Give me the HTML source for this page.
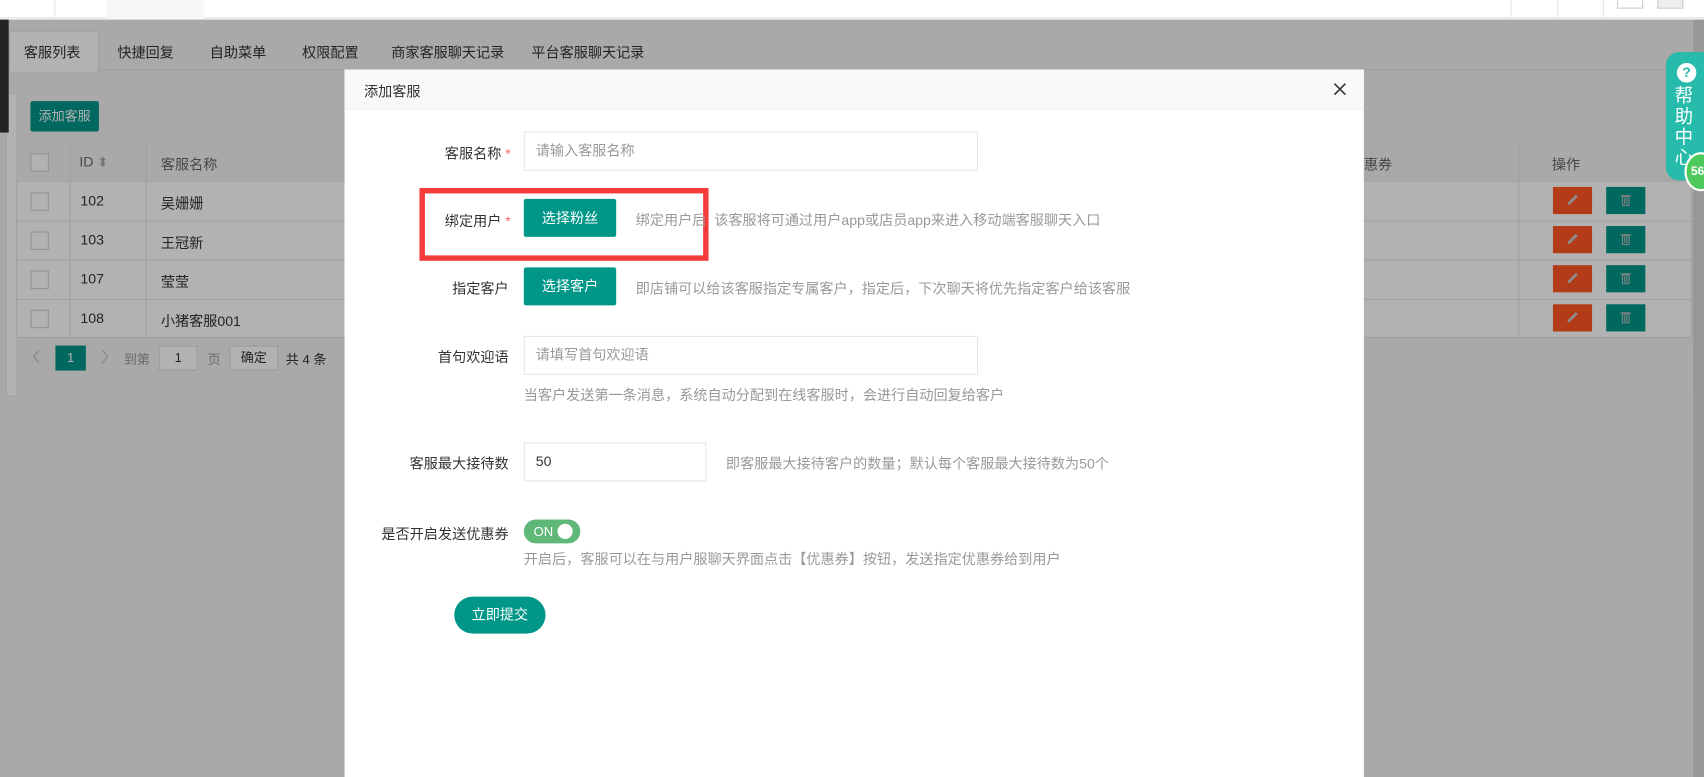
<!DOCTYPE html>
<html><head><meta charset="utf-8"><style>
*{box-sizing:border-box;margin:0;padding:0}
body{width:1704px;height:777px;overflow:hidden;background:#fff;font-family:"Liberation Sans","Noto Sans CJK SC",sans-serif}
#w{position:absolute;left:0;top:0;width:1568px;height:715px;transform:scale(1.08673);transform-origin:0 0;overflow:hidden;font-size:13px;color:#333}
.a{position:absolute}
.ov{background:rgba(0,0,0,.3)}
.lbl{position:absolute;right:1105px;text-align:right;font-size:13px;color:#333;white-space:nowrap}
.inp{position:absolute;left:482px;border:1px solid #e6e6e6;background:#fff;height:36px;line-height:34px;padding-left:10px;color:#999;font-size:13px}
.btn{position:absolute;left:482px;width:85px;height:35px;background:#009688;color:#fff;text-align:center;line-height:35px;border-radius:2px;font-size:13px}
.hint{position:absolute;color:#999;font-size:13px;white-space:nowrap}
.star{color:#f56c6c}
.ed{position:absolute;left:1429px;width:36px;height:25px;background:#ff5722}
.dl{position:absolute;left:1478px;width:36px;height:25px;background:#009688}
.ed svg,.dl svg{position:absolute;left:12px;top:6px}
</style></head><body><div id="w">
<div class="a" style="left:0;top:0;width:1568px;height:17px;background:#fff;border-bottom:1px solid #ddd"></div>
<div class="a" style="left:50px;top:0;width:1px;height:17px;background:#e5e5e5"></div>
<div class="a" style="left:98px;top:0;width:90px;height:17px;background:#f6f6f6"></div>
<div class="a" style="left:1390px;top:0;width:1px;height:17px;background:#e5e5e5"></div>
<div class="a" style="left:1433px;top:0;width:1px;height:17px;background:#e5e5e5"></div>
<div class="a" style="left:1475px;top:0;width:1px;height:17px;background:#e5e5e5"></div>
<div class="a" style="left:1488px;top:0;width:24px;height:8px;border:1px solid #ccc;border-top:0"></div>
<div class="a" style="left:1525px;top:0;width:24px;height:8px;background:#eee;border:1px solid #ccc;border-top:0"></div>
<div class="a" style="left:0;top:18px;width:1568px;height:697px;background:#f2f2f2"></div>
<div class="a" style="left:0;top:28px;width:1558px;height:37px;background:#f2f2f2;border-bottom:1px solid #e2e2e2"></div>
<div class="a" style="left:8px;top:28px;width:83px;height:38px;background:#fff;border:1px solid #e2e2e2;border-bottom:0"></div>
<div class="a" style="top:38px;left:22px;font-size:13px;color:#333;white-space:nowrap">客服列表</div>
<div class="a" style="top:38px;left:108px;font-size:13px;color:#333">快捷回复</div>
<div class="a" style="top:38px;left:193px;font-size:13px;color:#333">自助菜单</div>
<div class="a" style="top:38px;left:278px;font-size:13px;color:#333">权限配置</div>
<div class="a" style="top:38px;left:360px;font-size:13px;color:#333">商家客服聊天记录</div>
<div class="a" style="top:38px;left:489px;font-size:13px;color:#333">平台客服聊天记录</div>
<div class="a" style="left:5px;top:85px;width:1553px;height:280px;background:#fff;border:1px solid #e6e6e6"></div>
<div class="a" style="left:15px;top:85px;width:1543px;height:280px;background:#f2f2f2"></div>
<div class="a" style="left:15px;top:131px;width:1542px;height:180px;background:#fff;border:1px solid #e6e6e6"></div>
<div class="a" style="left:15px;top:131px;width:1542px;height:36px;background:#f2f2f2;border-bottom:1px solid #e6e6e6"></div>
<div class="a" style="left:28px;top:93px;width:63px;height:28px;background:#009688;color:#fff;font-size:12px;line-height:28px;text-align:center;border-radius:2px">添加客服</div>
<div class="a" style="left:64px;top:131px;width:1px;height:180px;background:#e6e6e6"></div>
<div class="a" style="left:134px;top:131px;width:1px;height:180px;background:#e6e6e6"></div>
<div class="a" style="left:1397px;top:131px;width:1px;height:180px;background:#e6e6e6"></div>
<div class="a" style="left:73px;top:141px;color:#666">ID <span style="color:#aaa;font-size:12px">⬍</span></div>
<div class="a" style="left:148px;top:141px;color:#666">客服名称</div>
<div class="a" style="left:1255px;top:141px;color:#666">惠券</div>
<div class="a" style="left:1428px;top:141px;color:#666">操作</div>
<div class="a" style="left:28px;top:141px;width:17px;height:17px;border:1px solid #d2d2d2;background:#fff"></div>
<div class="a" style="left:15px;top:203px;width:1542px;height:1px;background:#e6e6e6"></div>
<div class="a" style="left:15px;top:239px;width:1542px;height:1px;background:#e6e6e6"></div>
<div class="a" style="left:15px;top:275px;width:1542px;height:1px;background:#e6e6e6"></div>
<div class="a" style="left:28px;top:177px;width:17px;height:17px;border:1px solid #d2d2d2;background:#fff"></div>
<div class="a" style="left:28px;top:213px;width:17px;height:17px;border:1px solid #d2d2d2;background:#fff"></div>
<div class="a" style="left:28px;top:249px;width:17px;height:17px;border:1px solid #d2d2d2;background:#fff"></div>
<div class="a" style="left:28px;top:285px;width:17px;height:17px;border:1px solid #d2d2d2;background:#fff"></div>
<div class="a" style="left:74px;top:177px">102</div><div class="a" style="left:148px;top:177px">吴姗姗</div>
<div class="a" style="left:74px;top:213px">103</div><div class="a" style="left:148px;top:213px">王冠新</div>
<div class="a" style="left:74px;top:249px">107</div><div class="a" style="left:148px;top:249px">莹莹</div>
<div class="a" style="left:74px;top:285px">108</div><div class="a" style="left:148px;top:285px">小猪客服001</div>
<div class="ed" style="top:172px"><svg width="12" height="12"><path d="M2 10L10 2" stroke="#ccc" stroke-width="2.5"/></svg></div>
<div class="dl" style="top:172px"><svg width="12" height="12"><path d="M1 2h10M3 3h6v8H3zM5 4v6M7 4v6" stroke="#bbb" fill="none"/></svg></div>
<div class="ed" style="top:208px"><svg width="12" height="12"><path d="M2 10L10 2" stroke="#ccc" stroke-width="2.5"/></svg></div>
<div class="dl" style="top:208px"><svg width="12" height="12"><path d="M1 2h10M3 3h6v8H3zM5 4v6M7 4v6" stroke="#bbb" fill="none"/></svg></div>
<div class="ed" style="top:244px"><svg width="12" height="12"><path d="M2 10L10 2" stroke="#ccc" stroke-width="2.5"/></svg></div>
<div class="dl" style="top:244px"><svg width="12" height="12"><path d="M1 2h10M3 3h6v8H3zM5 4v6M7 4v6" stroke="#bbb" fill="none"/></svg></div>
<div class="ed" style="top:280px"><svg width="12" height="12"><path d="M2 10L10 2" stroke="#ccc" stroke-width="2.5"/></svg></div>
<div class="dl" style="top:280px"><svg width="12" height="12"><path d="M1 2h10M3 3h6v8H3zM5 4v6M7 4v6" stroke="#bbb" fill="none"/></svg></div>
<div class="a" style="left:28px;top:320px"><svg width="10" height="16"><path d="M8 2L3 8l5 6" stroke="#bbb" fill="none"/></svg></div>
<div class="a" style="left:51px;top:318px;width:28px;height:23px;background:#009688;color:#fff;text-align:center;line-height:23px;font-size:12px">1</div>
<div class="a" style="left:92px;top:320px"><svg width="10" height="16"><path d="M2 2l5 6-5 6" stroke="#bbb" fill="none"/></svg></div>
<div class="a" style="left:114px;top:322px;color:#999;font-size:12px">到第</div>
<div class="a" style="left:146px;top:318px;width:36px;height:23px;border:1px solid #ddd;background:#fff;text-align:center;line-height:21px;font-size:12px">1</div>
<div class="a" style="left:191px;top:322px;color:#999;font-size:12px">页</div>
<div class="a" style="left:211px;top:318px;width:45px;height:23px;border:1px solid #ddd;background:#fff;text-align:center;line-height:21px;font-size:12px">确定</div>
<div class="a" style="left:263px;top:322px;font-size:12px">共 4 条</div>
<div class="a" style="left:0;top:18px;width:8px;height:104px;background:#333"></div>
<div class="a ov" style="left:0;top:18px;width:1568px;height:697px"></div>
<div class="a" style="left:1558px;top:18px;width:10px;height:697px;background:rgba(0,0,0,.1)"></div>
<div class="a" style="left:1533px;top:48px;width:40px;height:118px;background:#26bbaa;border-radius:12px 0 0 12px"></div>
<div class="a" style="left:1543px;top:58px;width:18px;height:18px;border-radius:50%;background:#fff;color:#26bbaa;font-weight:bold;text-align:center;line-height:18px;font-size:13px">?</div>
<div class="a" style="left:1541px;top:79px;width:20px;color:#fff;font-size:17px;line-height:19px">帮<br>助<br>中<br>心</div>
<div class="a" style="left:1550px;top:140px;width:30px;height:36px;border-radius:50%;background:#4cc95a;border:2px solid #fff;color:#fff;font-weight:bold;font-size:11px;line-height:32px;padding-left:4px">56</div>
<div class="a" style="left:317px;top:64px;width:938px;height:660px;background:#fff"></div>
<div class="a" style="left:317px;top:64px;width:938px;height:37px;background:#f8f8f8;border-bottom:1px solid #eee"></div>
<div class="a" style="left:335px;top:74px;font-size:13px;color:#333">添加客服</div>
<div class="a" style="left:1227px;top:76px"><svg width="12" height="12"><path d="M1 1l10 10M11 1L1 11" stroke="#333" stroke-width="1.5"/></svg></div>
<div class="lbl" style="top:131px;right:1098px">客服名称 <span class="star">*</span></div>
<div class="inp" style="top:121px;width:418px">请输入客服名称</div>
<div class="a" style="left:386px;top:173px;width:266px;height:67px;border:5px solid #f63b3b"></div>
<div class="lbl" style="top:193px;right:1098px">绑定用户 <span class="star">*</span></div>
<div class="btn" style="top:183px">选择粉丝</div>
<div class="hint" style="left:585px;top:192px">绑定用户后&nbsp;&nbsp;该客服将可通过用户app或店员app来进入移动端客服聊天入口</div>
<div class="lbl" style="top:255px;right:1100px">指定客户</div>
<div class="btn" style="top:246px">选择客户</div>
<div class="hint" style="left:585px;top:255px">即店铺可以给该客服指定专属客户，指定后，下次聊天将优先指定客户给该客服</div>
<div class="lbl" style="top:318px;right:1100px">首句欢迎语</div>
<div class="inp" style="top:309px;width:418px">请填写首句欢迎语</div>
<div class="hint" style="left:482px;top:353px">当客户发送第一条消息，系统自动分配到在线客服时，会进行自动回复给客户</div>
<div class="lbl" style="top:416px;right:1100px">客服最大接待数</div>
<div class="inp" style="top:407px;width:168px;color:#333">50</div>
<div class="hint" style="left:668px;top:416px">即客服最大接待客户的数量；默认每个客服最大接待数为50个</div>
<div class="lbl" style="top:481px;right:1100px">是否开启发送优惠券</div>
<div class="a" style="left:482px;top:478px;width:52px;height:22px;border-radius:11px;background:#5fb878;color:#fff;font-size:12px;line-height:22px;padding-left:9px">ON</div>
<div class="a" style="left:513px;top:482px;width:14px;height:14px;border-radius:50%;background:#fff"></div>
<div class="hint" style="left:482px;top:504px">开启后，客服可以在与用户服聊天界面点击【优惠券】按钮，发送指定优惠券给到用户</div>
<div class="a" style="left:418px;top:549px;width:84px;height:34px;border-radius:17px;background:#009688;color:#fff;text-align:center;line-height:34px">立即提交</div>
</div></body></html>
